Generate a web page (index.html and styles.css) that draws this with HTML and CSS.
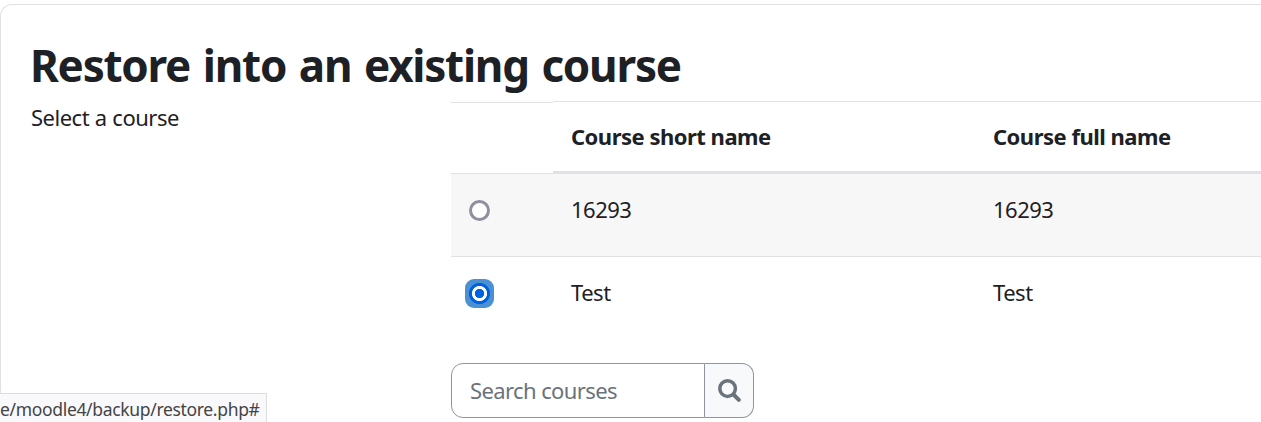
FILE: index.html
```html
<!DOCTYPE html>
<html lang="en">
<head>
    <meta charset="UTF-8">
    <meta name="viewport" content="width=device-width, initial-scale=1.0">
    <title>Restore course</title>
    <link rel="stylesheet" href="styles.css">
</head>
<body>
    <main class="card">
        <h2>Restore into an existing course</h2>
        <form class="restore-form">
            <div class="form-label">Select a course</div>
            <div class="form-content">
                <div class="course-table">
                    <div class="row head">
                        <div class="cell"></div>
                        <div class="cell">Course short name</div>
                        <div class="cell">Course full name</div>
                    </div>
                    <div class="row odd">
                        <div class="cell"><input type="radio" name="targetid" aria-label="16293"></div>
                        <div class="cell">16293</div>
                        <div class="cell">16293</div>
                    </div>
                    <div class="row">
                        <div class="cell"><input type="radio" name="targetid" aria-label="Test" checked></div>
                        <div class="cell">Test</div>
                        <div class="cell">Test</div>
                    </div>
                </div>
                <div class="search">
                    <input type="text" class="search-input" placeholder="Search courses">
                    <button type="button" class="search-btn" aria-label="Search">
                        <svg width="23" height="23" viewBox="0 0 23 23" fill="none" stroke="#6a737b">
                            <circle cx="9.6" cy="9.6" r="7.8" stroke-width="3.5"/>
                            <path d="M15.5 15.5 L20.8 20.8" stroke-width="4" stroke-linecap="round"/>
                        </svg>
                    </button>
                </div>
            </div>
        </form>
    </main>
    <div class="status-bar">e/moodle4/backup/restore.php#</div>
</body>
</html>
```

FILE: styles.css
```css
* { box-sizing: border-box; }
body {
    margin: 0;
    padding-top: 4px;
    background: #fff;
    color: #1d2125;
    font-family: "Segoe UI", "Noto Sans", sans-serif;
    font-size: 22px;
    line-height: 34px;
}
.card {
    height: 418px;
    padding: 32px 0 0 30px;
    border: 1px solid #dee2e6;
    border-width: 1px 0 0 1px;
    border-radius: 12px 0 0 0;
}
h2 {
    margin: 0 0 0 -1px;
    height: 64px;
    font-size: 44px;
    font-weight: 700;
    line-height: 56px;
    letter-spacing: -1.25px;
    word-spacing: 2.5px;
    white-space: nowrap;
}
.restore-form { display: flex; }
.form-label { width: 420px; margin-top: -1px; letter-spacing: -0.5px; word-spacing: 0.5px; }
.form-content { flex: 1; }

.row { display: grid; grid-template-columns: 102px 422px 1fr; height: 83px; }
.row .cell { padding: 18px 18px 0; border-top: 1px solid #dee2e6; letter-spacing: -0.5px; }
.row.head { height: 73px; font-weight: 700; }
.row.head .cell { padding-top: 17px; border-bottom: 3px solid #dee2e6; }
.row.head .cell:first-child { margin-top: 1px; border-bottom-width: 1px; }
.row.odd { height: 82px; background: #f7f7f7; }
.row.odd .cell { border-top: 0; }

input[type="radio"] {
    appearance: none;
    display: block;
    width: 21px;
    height: 21px;
    margin: 8px 0 0;
    border: 3px solid #8f8f9d;
    border-radius: 50%;
    background: #fff;
}
input[type="radio"]:checked {
    width: 29px;
    height: 29px;
    margin: 4px 0 0 -4px;
    border: 0;
    border-radius: 9px;
    background: radial-gradient(circle, #0060df 4.3px, #fff 5px, #fff 7.2px, #0060df 7.9px, #0060df 10.2px, #4a90d2 10.9px);
}

.search { display: flex; width: 303px; height: 55px; margin-top: 24px; }
.search-input {
    width: 254px;
    padding: 0 18px 1px;
    border: 1px solid #8f959e;
    border-radius: 12px 0 0 12px;
    font: inherit;
    letter-spacing: -0.6px;
}
.search-input::placeholder { color: #6a737b; opacity: 1; }
.search-btn {
    display: flex;
    align-items: center;
    justify-content: center;
    width: 49px;
    padding: 0;
    border: 1px solid #8f959e;
    border-left: 0;
    border-radius: 0 12px 12px 0;
    background: #f8f9fa;
}

/* browser link preview, sits over the page corner */
.status-bar {
    position: fixed;
    left: 0;
    bottom: 0;
    width: 267px;
    height: 29px;
    border: 1px solid #dcdcdc;
    border-width: 1px 1px 0 0;
    background: #f9f9fb;
    color: #444;
    font-size: 17.5px;
    line-height: 31px;
    letter-spacing: -0.33px;
    white-space: nowrap;
}
```
